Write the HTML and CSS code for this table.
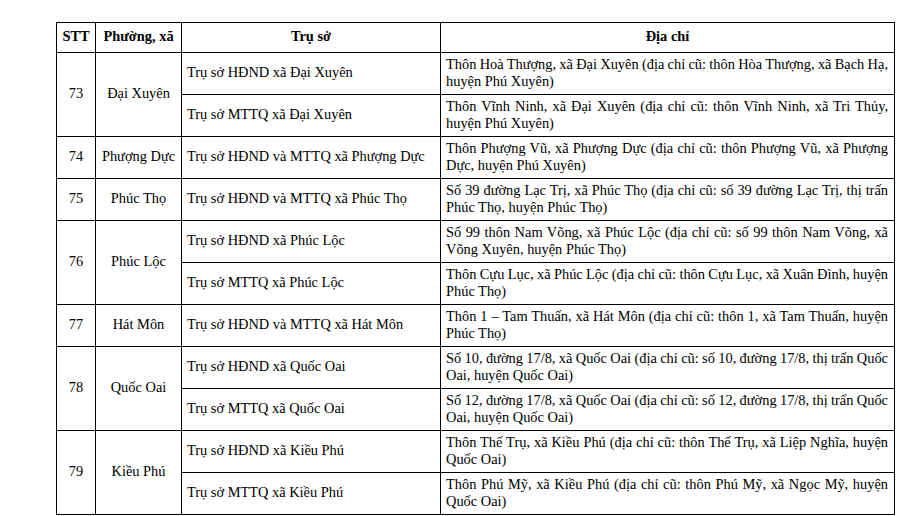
FILE: index.html
```html
<!DOCTYPE html>
<html lang="vi">
<head>
<meta charset="utf-8">
<title>Trụ sở</title>
<link rel="stylesheet" href="styles.css">
</head>
<body>
<table class="tbl">
  <colgroup>
    <col class="c-stt">
    <col class="c-xa">
    <col class="c-tru">
    <col class="c-dc">
  </colgroup>
  <thead>
    <tr><th>STT</th><th>Phường, xã</th><th>Trụ sở</th><th>Địa chỉ</th></tr>
  </thead>
  <tbody>
    <tr>
      <td class="ctr" rowspan="2">73</td><td class="ctr" rowspan="2">Đại Xuyên</td>
      <td>Trụ sở HĐND xã Đại Xuyên</td>
      <td class="addr"><span class="l1">Thôn Hoà Thượng, xã Đại Xuyên (địa chỉ cũ: thôn Hòa Thượng, xã Bạch Hạ,</span><span class="l2">huyện Phú Xuyên)</span></td>
    </tr>
    <tr>
      <td>Trụ sở MTTQ xã Đại Xuyên</td>
      <td class="addr"><span class="l1">Thôn Vĩnh Ninh, xã Đại Xuyên (địa chỉ cũ: thôn Vĩnh Ninh, xã Tri Thủy,</span><span class="l2">huyện Phú Xuyên)</span></td>
    </tr>
    <tr>
      <td class="ctr">74</td><td class="ctr">Phượng Dực</td>
      <td>Trụ sở HĐND và MTTQ xã Phượng Dực</td>
      <td class="addr"><span class="l1">Thôn Phượng Vũ, xã Phượng Dực (địa chỉ cũ: thôn Phượng Vũ, xã Phượng</span><span class="l2">Dực, huyện Phú Xuyên)</span></td>
    </tr>
    <tr>
      <td class="ctr">75</td><td class="ctr">Phúc Thọ</td>
      <td>Trụ sở HĐND và MTTQ xã Phúc Thọ</td>
      <td class="addr"><span class="l1">Số 39 đường Lạc Trị, xã Phúc Thọ (địa chỉ cũ: số 39 đường Lạc Trị, thị trấn</span><span class="l2">Phúc Thọ, huyện Phúc Thọ)</span></td>
    </tr>
    <tr>
      <td class="ctr" rowspan="2">76</td><td class="ctr" rowspan="2">Phúc Lộc</td>
      <td>Trụ sở HĐND xã Phúc Lộc</td>
      <td class="addr"><span class="l1">Số 99 thôn Nam Võng, xã Phúc Lộc (địa chỉ cũ: số 99 thôn Nam Võng, xã</span><span class="l2">Võng Xuyên, huyện Phúc Thọ)</span></td>
    </tr>
    <tr>
      <td>Trụ sở MTTQ xã Phúc Lộc</td>
      <td class="addr"><span class="l1">Thôn Cựu Lục, xã Phúc Lộc (địa chỉ cũ: thôn Cựu Lục, xã Xuân Đình, huyện</span><span class="l2">Phúc Thọ)</span></td>
    </tr>
    <tr>
      <td class="ctr">77</td><td class="ctr">Hát Môn</td>
      <td>Trụ sở HĐND và MTTQ xã Hát Môn</td>
      <td class="addr"><span class="l1">Thôn 1 – Tam Thuấn, xã Hát Môn (địa chỉ cũ: thôn 1, xã Tam Thuấn, huyện</span><span class="l2">Phúc Thọ)</span></td>
    </tr>
    <tr>
      <td class="ctr" rowspan="2">78</td><td class="ctr" rowspan="2">Quốc Oai</td>
      <td>Trụ sở HĐND xã Quốc Oai</td>
      <td class="addr"><span class="l1">Số 10, đường 17/8, xã Quốc Oai (địa chỉ cũ: số 10, đường 17/8, thị trấn Quốc</span><span class="l2">Oai, huyện Quốc Oai)</span></td>
    </tr>
    <tr>
      <td>Trụ sở MTTQ xã Quốc Oai</td>
      <td class="addr"><span class="l1">Số 12, đường 17/8, xã Quốc Oai (địa chỉ cũ: số 12, đường 17/8, thị trấn Quốc</span><span class="l2">Oai, huyện Quốc Oai)</span></td>
    </tr>
    <tr>
      <td class="ctr" rowspan="2">79</td><td class="ctr" rowspan="2">Kiều Phú</td>
      <td>Trụ sở HĐND xã Kiều Phú</td>
      <td class="addr"><span class="l1">Thôn Thế Trụ, xã Kiều Phú (địa chỉ cũ: thôn Thế Trụ, xã Liệp Nghĩa, huyện</span><span class="l2">Quốc Oai)</span></td>
    </tr>
    <tr>
      <td>Trụ sở MTTQ xã Kiều Phú</td>
      <td class="addr"><span class="l1">Thôn Phú Mỹ, xã Kiều Phú (địa chỉ cũ: thôn Phú Mỹ, xã Ngọc Mỹ, huyện</span><span class="l2">Quốc Oai)</span></td>
    </tr>
  </tbody>
</table>
</body>
</html>
```
FILE: styles.css
```css
html, body {
  margin: 0;
  padding: 0;
  background: #ffffff;
}
body {
  font-family: "Liberation Serif", "Times New Roman", serif;
  font-size: 14.4px;
  line-height: 17.5px;
  color: #000000;
}
.tbl {
  border-collapse: collapse;
  table-layout: fixed;
  width: 838px;
  margin: 22px 0 0 56px;
}
.c-stt { width: 39px; }
.c-xa { width: 86px; }
.c-tru { width: 259px; }
.c-dc { width: 454px; }
.tbl th, .tbl td {
  border: 1px solid #000000;
  padding: 3px 6px 3px 5px;
  vertical-align: middle;
  text-align: left;
  overflow: hidden;
}
.tbl th {
  font-weight: bold;
  text-align: center;
  padding: 5px 4px 6px;
}
.tbl td.ctr {
  text-align: center;
  padding: 3px 2px;
}
.addr .l1 {
  display: block;
  white-space: nowrap;
  word-spacing: -3px;
  text-align: justify;
  text-align-last: justify;
}
.addr .l2 {
  display: block;
  text-align: left;
}
```
